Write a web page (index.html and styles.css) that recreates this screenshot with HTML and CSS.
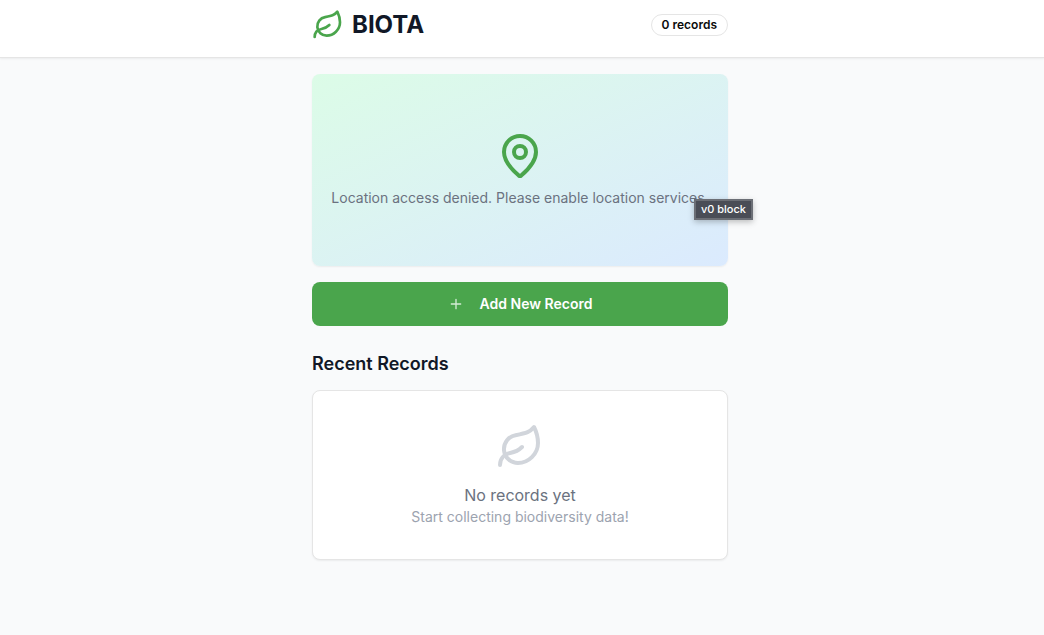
FILE: index.html
```
<!DOCTYPE html>
<html lang="en">
<head>
    <meta charset="UTF-8">
    <meta name="viewport" content="width=device-width, initial-scale=1.0">
    <title>BIOTA</title>
    <link rel="stylesheet" href="styles.css">
</head>
<body>
    <header class="header">
        <div class="container header-row">
            <div class="brand">
                <svg class="icon brand-icon" viewBox="0 0 24 24" aria-hidden="true">
                    <path d="M11 20A7 7 0 0 1 9.8 6.1C15.5 5 17 4.48 19 2c1 2 2 4.18 2 8 0 5.5-4.78 10-10 10Z"/>
                    <path d="M2 21c0-3 1.85-5.36 5.08-6C9.5 14.52 12 13 13 12"/>
                </svg>
                <h1>BIOTA</h1>
            </div>
            <span class="badge">0 records</span>
        </div>
    </header>

    <main class="main">
        <div class="container">
            <section class="map-card">
                <svg class="icon map-icon" viewBox="0 0 24 24" aria-hidden="true">
                    <path d="M20 10c0 4.993-5.539 10.193-7.399 11.799a1 1 0 0 1-1.202 0C9.539 20.193 4 14.993 4 10a8 8 0 0 1 16 0"/>
                    <circle cx="12" cy="10" r="3"/>
                </svg>
                <p>Location access denied. Please enable location services.</p>
                <span class="tooltip">v0 block</span>
            </section>

            <button class="add-btn" type="button">
                <svg class="icon add-icon" viewBox="0 0 24 24" aria-hidden="true">
                    <path d="M5 12h14M12 5v14"/>
                </svg>
                Add New Record
            </button>

            <h2>Recent Records</h2>
            <section class="empty-card">
                <svg class="icon empty-icon" viewBox="0 0 24 24" aria-hidden="true">
                    <path d="M11 20A7 7 0 0 1 9.8 6.1C15.5 5 17 4.48 19 2c1 2 2 4.18 2 8 0 5.5-4.78 10-10 10Z"/>
                    <path d="M2 21c0-3 1.85-5.36 5.08-6C9.5 14.52 12 13 13 12"/>
                </svg>
                <p class="empty-title">No records yet</p>
                <p class="empty-text">Start collecting biodiversity data!</p>
            </section>
        </div>
    </main>
</body>
</html>
```
FILE: styles.css
```
* {
    box-sizing: border-box;
}
body {
    margin: 0;
    min-height: 100vh;
    font-family: Inter, "Liberation Sans", sans-serif;
    font-size: 14px;
    line-height: 20px;
    color: #111827;
    background: #f9fafb;
}
h1, h2, p { margin: 0; }
.container {
    max-width: 448px;
    margin: 0 auto;
    padding: 0 16px;
}
.header, .main { padding-right: 4px; }
.header {
    padding-top: 9px;
    padding-bottom: 16px;
    background: white;
    border-bottom: 1px solid #e5e5e5;
    box-shadow: 0 1px 2px rgba(0, 0, 0, 0.06);
}
.main {
    padding-top: 16px;
    padding-bottom: 16px;
}
.header-row {
    display: flex;
    justify-content: space-between;
    align-items: center;
}
.brand {
    display: flex;
    align-items: center;
    gap: 8px;
}
h1 {
    font-size: 24px;
    line-height: 32px;
    font-weight: 700;
}
h2 {
    margin: 24px 0 12px;
    font-size: 18px;
    line-height: 28px;
    font-weight: 600;
}
.icon {
    display: block;
    flex-shrink: 0;
    fill: none;
    stroke: currentColor;
    stroke-width: 2;
    stroke-linecap: round;
    stroke-linejoin: round;
}
.brand-icon {
    width: 32px;
    height: 32px;
    color: #4aa54c;
}
.badge {
    padding: 2px 10px;
    border: 1px solid #e5e5e5;
    border-radius: 999px;
    font-size: 12px;
    line-height: 16px;
    font-weight: 600;
    color: #0a0a0a;
}
.map-card {
    position: relative;
    display: flex;
    flex-direction: column;
    align-items: center;
    justify-content: center;
    gap: 8px;
    height: 192px;
    margin-bottom: 16px;
    border-radius: 8px;
    color: #6b7280;
    background: linear-gradient(to bottom right, #dcfce7, #dbeafe);
    box-shadow: 0 1px 2px rgba(0, 0, 0, 0.06);
}
.map-icon {
    width: 48px;
    height: 48px;
    color: #4aa54c;
}
.tooltip {
    position: absolute;
    top: 125px;
    right: -25px;
    padding: 1px 5px;
    border: 2px solid #6b6e75;
    font-size: 11px;
    line-height: 15px;
    font-weight: 500;
    color: white;
    background: #4a4d56;
    box-shadow: 0 2px 6px rgba(0, 0, 0, 0.25);
}
.add-btn {
    display: flex;
    align-items: center;
    justify-content: center;
    gap: 16px;
    width: 100%;
    height: 44px;
    padding: 0 16px;
    border: none;
    border-radius: 8px;
    font: inherit;
    font-weight: 600;
    color: white;
    background: #4aa54c;
    cursor: pointer;
}
.add-btn:hover { background: #43964a; }
.add-icon {
    width: 16px;
    height: 16px;
    color: #d4ecd5;
}
.empty-card {
    display: flex;
    flex-direction: column;
    align-items: center;
    padding: 32px;
    border: 1px solid #e5e5e5;
    border-radius: 8px;
    background: white;
    box-shadow: 0 1px 2px rgba(0, 0, 0, 0.06);
}
.empty-icon {
    width: 48px;
    height: 48px;
    margin-bottom: 12px;
    color: #d1d5db;
}
.empty-title {
    font-size: 16px;
    line-height: 24px;
    color: #6b7280;
}
.empty-text { color: #9ca3af; }
```
